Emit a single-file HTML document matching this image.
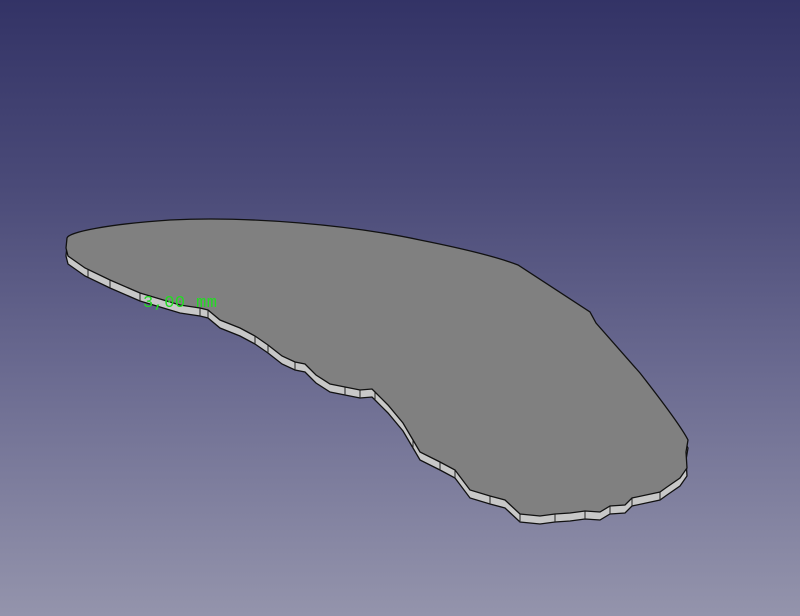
<!DOCTYPE html>
<html><head><style>
html,body{margin:0;padding:0;width:800px;height:616px;overflow:hidden}
body{background:linear-gradient(to bottom,#333366 0%,#4a4a78 30%,#6a6a90 60%,#9494ac 100%)}
svg{position:absolute;left:0;top:0}
</style></head><body>
<svg width="800" height="616" viewBox="0 0 800 616">
<defs>
<path id="top" d="M67,238 C68,232 110,224 170,220 C250,216 350,225 420,240 C460,248 495,256 518,265 L590,312 L596,323 L640,373 C665,405 683,430 688,440 L686,452 L687,468 L680,478 L667,487 L660,492 L632,498 L625,505 L610,506 L600,512 L585,511 L570,513 L555,514 L540,516 L520,514 L505,500 L490,496 L470,490 L455,470 L440,462 L420,452 L413,440 L403,423 L388,405 L375,392 L372,389 L360,390 L345,387 L330,384 L316,375 L305,364 L295,362 L282,356 L268,345 L255,336 L240,328 L220,320 L208,310 L200,308 L180,305 L140,293 L110,280 L85,268 L68,256 L66,248 Z"/>
</defs>
<g transform="translate(0,8)">
<use href="#top" fill="#c8c8c8" stroke="#111" stroke-width="1.3"/>
</g>
<g stroke="#222" stroke-width="1">
<line x1="88" y1="269" x2="88" y2="277"/><line x1="110" y1="280" x2="110" y2="288"/>
<line x1="140" y1="293" x2="140" y2="301"/><line x1="200" y1="308" x2="200" y2="316"/>
<line x1="208" y1="310" x2="208" y2="318"/><line x1="255" y1="336" x2="255" y2="344"/>
<line x1="268" y1="345" x2="268" y2="353"/><line x1="295" y1="362" x2="295" y2="370"/>
<line x1="345" y1="387" x2="345" y2="395"/><line x1="360" y1="390" x2="360" y2="398"/>
<line x1="375" y1="392" x2="375" y2="400"/><line x1="413" y1="440" x2="413" y2="448"/>
<line x1="440" y1="462" x2="440" y2="470"/><line x1="455" y1="470" x2="455" y2="478"/>
<line x1="490" y1="496" x2="490" y2="504"/><line x1="520" y1="514" x2="520" y2="522"/>
<line x1="555" y1="514" x2="555" y2="522"/><line x1="585" y1="511" x2="585" y2="519"/>
<line x1="610" y1="506" x2="610" y2="514"/><line x1="632" y1="498" x2="632" y2="506"/>
<line x1="660" y1="492" x2="660" y2="500"/>
</g>
<use href="#top" fill="#808080" stroke="#111" stroke-width="1.3"/>
<text x="143" y="307" font-family="Liberation Mono, monospace" font-size="17" fill="#22dd22" textLength="74">3,00 mm</text>
</svg>
</body></html>
